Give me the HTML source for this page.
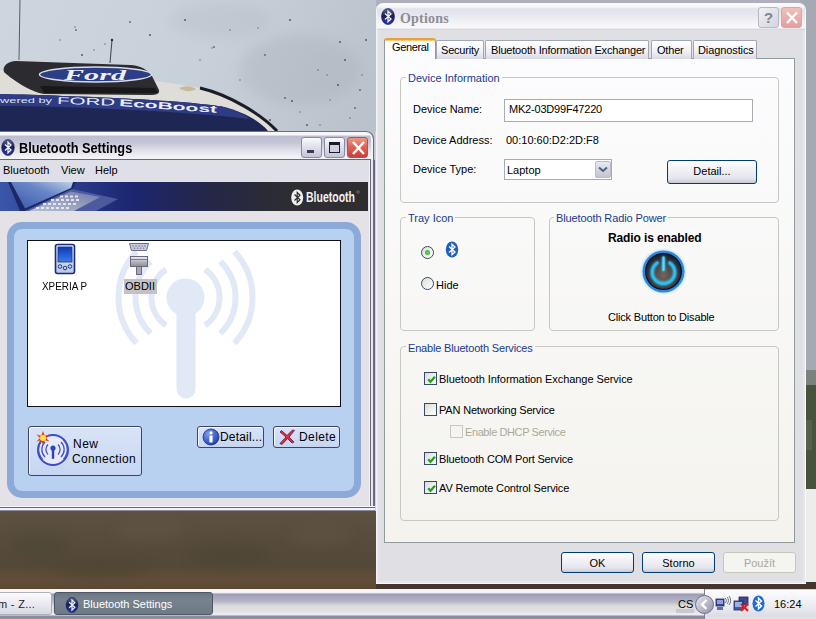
<!DOCTYPE html>
<html><head><meta charset="utf-8">
<style>
*{box-sizing:border-box;margin:0;padding:0}
html,body{width:816px;height:619px;overflow:hidden}
body{position:relative;font-family:"Liberation Sans",sans-serif;font-size:11px;color:#000;background:#C9D0D8}
.a{position:absolute}
.t{position:absolute;white-space:nowrap;line-height:13px}
/* desktop */
#sky{left:0;top:0;width:816px;height:590px;background:linear-gradient(100deg,#D2D8DF 0%,#C8CFD7 40%,#BCC3CA 100%)}
#ground{left:0;top:505px;width:816px;height:86px;background:linear-gradient(90deg,#66583F 0%,#5C4E3A 40%,#5A4C3A 70%,#4E4436 100%)}
/* BT settings window */
#bw{left:-10px;top:131px;width:379px;height:375px;background:#E4E2E6}
#btitle{left:-10px;top:131px;width:384px;height:30px;border-radius:0 8px 0 0;border-top:1px solid #70707E;border-right:1px solid #6A6A80;
 background:linear-gradient(180deg,#F6F6FA 0px,#F8F8FC 3px,#BDBDD0 4px,#C6C6D8 11px,#DCDCE6 17px,#F2F2F6 25px,#F4F4F8 27px,#686878 27px,#686878 29px);box-shadow:inset -2px 0 0 #F0F0F6}
#bmenu{left:0;top:160px;width:369px;height:21px;background:#DFDFE7}
#banner{left:0;top:182px;width:368px;height:29px;background:linear-gradient(90deg,#3A58A8 0%,#2A4090 25%,#1E2E78 40%,#20244A 58%,#2C2C34 72%,#2E2E2E 100%)}
.tbtn{position:absolute;width:21px;height:21px;border:1px solid #8A8AA6;border-radius:3px;background:linear-gradient(180deg,#FAFAFE 0%,#E4E4EE 40%,#C4C4D8 100%)}
.cls{border-color:#B85050;background:linear-gradient(180deg,#F09888 0%,#E06454 45%,#C84040 100%)}
.pbtn{position:absolute;border:1px solid #3C4660;border-radius:3px;background:linear-gradient(180deg,#D8E4F8,#C6D6F2);box-shadow:inset 1px 1px 0 #F4F8FF}
.ina{border-color:#B8B8C4;background:linear-gradient(135deg,#F0F0F4,#D4D4E0)}
.clsi{border-color:#D8A8A8;background:linear-gradient(180deg,#F0C0B8,#E0A0A0)}
.tab{position:absolute;height:19px;border:1px solid #A0A8B4;border-bottom:none;border-radius:2px 2px 0 0;background:linear-gradient(180deg,#FFFFFF 0%,#F0F0F4 60%,#D8D8E4 100%)}
.grp{position:absolute;border:1px solid #C8C8C2;border-radius:4px}
.gl{background:#FAFAF9;padding:0 2px;color:#1A3A8C}
.xbtn{position:absolute;border:1px solid #003C74;border-radius:3px;background:linear-gradient(180deg,#FFFFFF 0%,#F4F4F8 30%,#E4E4EC 80%,#C8C8D4 100%)}
.radio{position:absolute;width:13px;height:13px;border-radius:50%;border:1px solid #3A4A66;background:linear-gradient(135deg,#DCDCD6,#FFFFFF)}
.chk{position:absolute;width:13px;height:13px;border:1px solid #3A4A66;background:linear-gradient(135deg,#DCDCD6,#FFFFFF)}
.chk.dis{border-color:#CAC8BB;background:#F4F4F0}
</style></head>
<body>
<svg class="a" style="left:0;top:0" width="816" height="590" viewBox="0 0 816 590">
 <defs>
  <linearGradient id="skyg" x1="0" y1="0" x2="1" y2="0.3"><stop offset="0" stop-color="#CDD5DF"/><stop offset="0.25" stop-color="#C8D0DA"/><stop offset="0.46" stop-color="#BAC2CC"/><stop offset="1" stop-color="#A8ADB8"/></linearGradient>
  <linearGradient id="gnd" x1="0" y1="0" x2="0" y2="1"><stop offset="0" stop-color="#5E5442"/><stop offset="0.4" stop-color="#584C3C"/><stop offset="0.7" stop-color="#544838"/><stop offset="0.88" stop-color="#624E38"/><stop offset="1" stop-color="#5A4834"/></linearGradient>
  <filter id="blr" x="-50%" y="-50%" width="200%" height="200%"><feGaussianBlur stdDeviation="6"/></filter>
 </defs>
 <rect width="816" height="590" fill="url(#skyg)"/>
 <rect x="376" y="0" width="440" height="6" fill="#AEB0BC"/>
 <rect x="800" y="0" width="16" height="370" fill="#A8ADB8"/>
 <!-- right strip -->
 <rect x="800" y="0" width="16" height="385" fill="#A4A9B4"/>
 <rect x="800" y="370" width="16" height="20" fill="#6A7068" opacity="0.7"/>
 <rect x="800" y="385" width="16" height="105" fill="#48533E"/>
 <rect x="806" y="420" width="6" height="30" fill="#5C6650" opacity="0.7"/>
 <rect x="0" y="505" width="816" height="85" fill="url(#gnd)"/>
 <g filter="url(#blr)" opacity="0.5">
  <ellipse cx="40" cy="545" rx="30" ry="12" fill="#4A4636"/><ellipse cx="150" cy="530" rx="35" ry="10" fill="#625846"/>
  <ellipse cx="230" cy="555" rx="40" ry="12" fill="#4A4434"/><ellipse cx="320" cy="535" rx="30" ry="10" fill="#605644"/>
  <ellipse cx="100" cy="570" rx="50" ry="8" fill="#4C4232"/>
 </g>
 <rect x="800" y="489" width="16" height="94" fill="#EDEDEB"/>
 <rect x="376" y="582" width="440" height="8" fill="#44382E"/>
 <!-- car roof -->
 <path d="M0 70 C60 72 150 78 200 88 C230 95 262 115 277 131 L0 131 Z" fill="#DEDDD8"/>
 <path d="M200 88 C230 95 262 115 277 131" fill="none" stroke="#1A1C28" stroke-width="3"/>
 <path d="M0 94 C80 96 180 100 222 106.5 C245 112 261 122 268 131 L0 131 Z" fill="#1E2654"/>
 <path d="M0 94 C80 96 180 100 222 106.5 C235 110 245 115 250 119 C170 110 60 106 0 106 Z" fill="#2E3C86"/>
 <text x="0" y="103" font-family="Liberation Sans" font-size="8" fill="#DDE2EE" textLength="52" lengthAdjust="spacingAndGlyphs">wered by</text>
 <text x="57" y="104" font-family="Liberation Sans" font-size="10" fill="#E8ECF4" textLength="58" lengthAdjust="spacingAndGlyphs" transform="rotate(1.5 57 104)">FORD</text>
 <text x="119" y="106" font-family="Liberation Sans" font-size="10" font-weight="bold" fill="#E8ECF4" textLength="98" lengthAdjust="spacingAndGlyphs" transform="rotate(4 119 106)">EcoBoost</text>
 <!-- scoop -->
 <path d="M4 72 C2 66 8 61 16 61 L130 65 C140 65 148 70 152 76 L159 90 C160 94 156 95 150 95 L44 94 C30 92 10 78 4 72 Z" fill="#2C2C30"/>
 <path d="M40 86 L155 88 L158 93 L44 93 Z" fill="#18181A"/>
 <ellipse cx="95.5" cy="74.5" rx="56" ry="7.5" fill="#2B3E86" stroke="#D8DCE8" stroke-width="1.4"/>
 <text x="64" y="80" font-family="Liberation Serif" font-style="italic" font-weight="bold" font-size="14" fill="#EEF0F6" textLength="62" lengthAdjust="spacingAndGlyphs">Ford</text>
 <path d="M179 88 C185 85 193 86 196 89 C192 92 184 92 179 88 Z" fill="#C8BC98"/>
 <!-- antennas -->
 <line x1="20" y1="0" x2="19" y2="60" stroke="#5A5E66" stroke-width="1"/>
 <line x1="112" y1="40" x2="110" y2="63" stroke="#4A4E56" stroke-width="1.1"/>
 <circle cx="112" cy="40" r="1.2" fill="#2A2A30"/>
 <!-- specks -->
 <g filter="url(#blr)" opacity="0.22">
  <ellipse cx="300" cy="70" rx="60" ry="35" fill="#9AA2AC"/><ellipse cx="220" cy="20" rx="50" ry="18" fill="#A8B0BA"/>
 </g>
 <g fill="#3E4248" opacity="0.75"><circle cx="76" cy="30" r="0.9"/><circle cx="94" cy="50" r="0.7"/><circle cx="214" cy="47" r="0.9"/><circle cx="292" cy="101" r="1.1"/><circle cx="327" cy="75" r="0.7"/><circle cx="350" cy="118" r="0.7"/><circle cx="340" cy="42" r="1.1"/><circle cx="258" cy="28" r="0.7"/><circle cx="360" cy="90" r="0.9"/><circle cx="307" cy="125" r="1.1"/><circle cx="75" cy="27" r="0.7"/><circle cx="82" cy="55" r="1.1"/><circle cx="105" cy="44" r="0.7"/><circle cx="212" cy="48" r="0.7"/><circle cx="230" cy="30" r="0.7"/><circle cx="265" cy="55" r="0.9"/><circle cx="285" cy="98" r="0.9"/><circle cx="300" cy="112" r="0.7"/><circle cx="318" cy="70" r="0.7"/><circle cx="330" cy="100" r="0.7"/><circle cx="345" cy="60" r="1.1"/><circle cx="355" cy="108" r="0.9"/><circle cx="362" cy="75" r="0.7"/><circle cx="290" cy="20" r="1.1"/><circle cx="240" cy="80" r="0.7"/><circle cx="200" cy="60" r="0.7"/><circle cx="150" cy="35" r="1.1"/><circle cx="185" cy="20" r="1.1"/><circle cx="270" cy="120" r="1.1"/><circle cx="320" cy="125" r="0.7"/><circle cx="338" cy="85" r="1.1"/><circle cx="366" cy="40" r="1.1"/><circle cx="130" cy="22" r="0.9"/><circle cx="60" cy="40" r="0.7"/></g>
</svg>


<!-- Bluetooth settings window -->
<div id="bw" class="a"></div>
<div id="btitle" class="a"></div>
<svg class="a" style="left:1px;top:139px" width="14" height="17" viewBox="0 0 14 17">
 <ellipse cx="7" cy="8.5" rx="6.3" ry="8" fill="url(#bti)" stroke="#101030" stroke-width="0.6"/>
 <path d="M4 5.5 L10 11 L7 13.8 V3.2 L10 6 L4 11.5" fill="none" stroke="#F0F0FF" stroke-width="1.3"/>
</svg>
<div class="t" style="left:19px;top:140px;font-size:14px;font-weight:bold;color:#000;line-height:16px;transform:scaleX(0.91);transform-origin:0 0">Bluetooth Settings</div>
<div id="bmenu" class="a"></div>
<div class="t" style="left:3px;top:164px">Bluetooth</div>
<div class="t" style="left:61px;top:164px">View</div>
<div class="t" style="left:95px;top:164px">Help</div>
<svg class="a" style="left:0;top:182px" width="368" height="29" viewBox="0 182 368 29">
 <defs>
  <linearGradient id="bng" x1="0" y1="0" x2="1" y2="0"><stop offset="0" stop-color="#3A56A8"/><stop offset="0.2" stop-color="#2A3C8C"/><stop offset="0.36" stop-color="#1C2670"/><stop offset="0.55" stop-color="#24264A"/><stop offset="0.75" stop-color="#2C2C34"/><stop offset="1" stop-color="#2E2E30"/></linearGradient>
  <linearGradient id="scr" x1="0" y1="1" x2="1" y2="0"><stop offset="0" stop-color="#3A56A8"/><stop offset="0.6" stop-color="#6A86C8"/><stop offset="1" stop-color="#C0CEEA"/></linearGradient>
  <linearGradient id="kbd" x1="0" y1="1" x2="1" y2="0"><stop offset="0" stop-color="#B8C0D4"/><stop offset="0.6" stop-color="#9098B8"/><stop offset="1" stop-color="#6A78B0"/></linearGradient>
 </defs>
 <rect x="0" y="182" width="368" height="29" fill="url(#bng)"/>
 <path d="M8 182 L76 182 L73 189 L25 211 L20 211 Z" fill="#1A2868"/>
 <path d="M11 182 L73 182 L71 188 L25 208.5 Z" fill="url(#scr)"/>
 <path d="M25 211 L72 189 L118 199 L96 211 Z" fill="#5A68A8" opacity="0.75"/>
 <path d="M29 211 L71 191.5 L100 197 L74 211 Z" fill="url(#kbd)"/>
 <g fill="#F0F2FA" opacity="0.85">
  <rect x="36" y="207" width="3" height="2"/><rect x="41" y="207" width="3" height="2"/><rect x="46" y="207" width="3" height="2"/><rect x="51" y="207" width="3" height="2"/><rect x="56" y="207" width="3" height="2"/><rect x="61" y="207" width="3" height="2"/><rect x="66" y="207" width="3" height="2"/>
  <rect x="43" y="203" width="3" height="2"/><rect x="48" y="203" width="3" height="2"/><rect x="53" y="203" width="3" height="2"/><rect x="58" y="203" width="3" height="2"/><rect x="63" y="203" width="3" height="2"/><rect x="68" y="203" width="3" height="2"/><rect x="73" y="203" width="3" height="2"/>
  <rect x="51" y="199" width="3" height="2"/><rect x="56" y="199" width="3" height="2"/><rect x="61" y="199" width="3" height="2"/><rect x="66" y="199" width="3" height="2"/><rect x="71" y="199" width="3" height="2"/><rect x="76" y="199" width="3" height="2"/>
  <rect x="60" y="195.5" width="3" height="2"/><rect x="65" y="195.5" width="3" height="2"/><rect x="70" y="195.5" width="3" height="2"/><rect x="75" y="195.5" width="3" height="2"/>
 </g>
 <ellipse cx="297.2" cy="197.5" rx="6" ry="8" fill="#F0F0F0"/>
 <path d="M294.5 194.5 L300 199.8 L297.2 202.5 V192.5 L300 195.2 L294.5 200.5" fill="none" stroke="#2E2E30" stroke-width="1.2"/>
 <text x="306" y="202.5" font-family="Liberation Sans" font-weight="bold" font-size="15" fill="#F2F2F2" transform="translate(306 0) scale(0.7 1) translate(-306 0)">Bluetooth</text>
 <circle cx="358" cy="192" r="1.3" fill="none" stroke="#999" stroke-width="0.5"/>
</svg>

<!-- title buttons -->
<div class="a tbtn" style="left:301px;top:137px"><div class="a" style="left:5px;top:12px;width:7px;height:3px;background:#3A3A50"></div></div>
<div class="a tbtn" style="left:324px;top:137px"><div class="a" style="left:4px;top:4px;width:11px;height:11px;border:1px solid #1A1A2A;border-top-width:3px;background:#D0D0DC"></div></div>
<div class="a tbtn cls" style="left:347px;top:137px"><svg class="a" style="left:0;top:0" width="21" height="21"><path d="M5 4L16 16M16 4L5 16" stroke="#fff" stroke-width="2.4"/></svg></div>

<!-- right frame -->
<div class="a" style="left:369px;top:160px;width:6px;height:351px;background:linear-gradient(90deg,#F4F4F8 0px,#F4F4F8 1px,#686878 1px,#686878 2px,#E8E8F0 2px,#E8E8F0 4px,#6A6A80 4px,#6A6A80 6px)"></div>
<div class="a" style="left:0;top:506px;width:375px;height:5px;background:linear-gradient(180deg,#F4F4F8 0px,#F4F4F8 1px,#686878 1px,#686878 2px,#F0F0F6 2px,#F0F0F6 4px,#8A8A98 4px)"></div>
<div class="a" style="left:375px;top:131px;width:1px;height:380px;background:#D0D0DC"></div>
<!-- blue panel -->
<div class="a" style="left:7px;top:222px;width:354px;height:276px;border:7px solid #8BAAD8;border-radius:15px;background:#B9D1F0"></div>
<!-- list -->
<div class="a" style="left:27px;top:240px;width:314px;height:167px;border:1px solid #101018;background:#fff;overflow:hidden">
 <svg class="a" style="left:0;top:0" width="313" height="165" viewBox="27 240 313 165">
  <g fill="none" stroke="#E1E8F6" stroke-width="6">
   <path d="M165 268.5 A34 34 0 0 0 165 324.3"/>
   <path d="M204 268.5 A34 34 0 0 1 204 324.3"/>
   <path d="M149.7 260.5 A50 50 0 0 0 149.7 332.3"/>
   <path d="M219.3 260.5 A50 50 0 0 1 219.3 332.3"/>
   <path d="M135.5 250.7 A67 67 0 0 0 135.5 342.1"/>
   <path d="M233.5 250.7 A67 67 0 0 1 233.5 342.1"/>
  </g>
  <circle cx="184.5" cy="296.4" r="19" fill="#E1E8F6"/>
  <path d="M175.5 300 L194.5 300 L194.5 388 A9.5 9.5 0 0 1 175.5 388 Z" fill="#E1E8F6"/>
 </svg>
</div>
<!-- list items -->
<svg class="a" style="left:54px;top:243px" width="22" height="32" viewBox="0 0 22 32">
 <defs><linearGradient id="pda" x1="0" y1="0" x2="0" y2="1"><stop offset="0" stop-color="#E4ECF8"/><stop offset="1" stop-color="#B8C8E4"/></linearGradient>
 <linearGradient id="pdas" x1="0" y1="0" x2="0" y2="1"><stop offset="0" stop-color="#0C3ABC"/><stop offset="1" stop-color="#3C7CE8"/></linearGradient></defs>
 <rect x="1.5" y="1.5" width="19" height="29" rx="2" fill="url(#pda)" stroke="#1A2A80" stroke-width="1.6"/>
 <rect x="4" y="4" width="14" height="15" fill="url(#pdas)" stroke="#24366A" stroke-width="0.8"/>
 <circle cx="6" cy="23.5" r="1.8" fill="none" stroke="#2A3A7A" stroke-width="1"/>
 <circle cx="11" cy="25" r="1.8" fill="none" stroke="#2A3A7A" stroke-width="1"/>
 <circle cx="16" cy="23.5" r="1.8" fill="none" stroke="#2A3A7A" stroke-width="1"/>
</svg>
<div class="t" style="left:42px;top:280px;transform:scaleX(0.9);transform-origin:0 0">XPERIA P</div>
<svg class="a" style="left:128px;top:242px" width="22" height="34" viewBox="0 0 22 34">
 <defs><linearGradient id="plug" x1="0" y1="0" x2="0" y2="1"><stop offset="0" stop-color="#F0F0F4"/><stop offset="0.5" stop-color="#B8B8C4"/><stop offset="1" stop-color="#8A8A98"/></linearGradient></defs>
 <path d="M1.5 1.5 H20.5 L18.5 8.5 H3.5 Z" fill="#C8CCDC" stroke="#6A6E88" stroke-width="1"/>
 <g fill="#7A7E98"><circle cx="5" cy="4" r="0.8"/><circle cx="8" cy="4" r="0.8"/><circle cx="11" cy="4" r="0.8"/><circle cx="14" cy="4" r="0.8"/><circle cx="17" cy="4" r="0.8"/><circle cx="6.5" cy="6.3" r="0.8"/><circle cx="9.5" cy="6.3" r="0.8"/><circle cx="12.5" cy="6.3" r="0.8"/><circle cx="15.5" cy="6.3" r="0.8"/></g>
 <rect x="2.5" y="14.5" width="17" height="10" fill="url(#plug)" stroke="#6A6A7A" stroke-width="1"/>
 <line x1="2.5" y1="17.5" x2="19.5" y2="17.5" stroke="#6A6A7A" stroke-width="0.8"/>
 <rect x="8.5" y="24.5" width="5" height="8" fill="#A8A8B4" stroke="#6A6A7A" stroke-width="1"/>
</svg>
<div class="a" style="left:124px;top:279px;width:33px;height:15px;background:#C2C2C6"></div>
<div class="t" style="left:125px;top:280px">OBDII</div>
<!-- buttons -->
<div class="a pbtn" style="left:28px;top:426px;width:114px;height:50px"></div>
<svg class="a" style="left:35px;top:430px" width="36" height="38" viewBox="0 0 36 38">
 <circle cx="18" cy="20" r="15" fill="#E4EAFA" stroke="#3C4CC8" stroke-width="2"/>
 <g fill="none" stroke="#4050D0" stroke-width="1.3">
  <path d="M13 14.5 A7 7 0 0 0 13 24.5"/><path d="M23 14.5 A7 7 0 0 1 23 24.5"/>
  <path d="M10 12 A10.5 10.5 0 0 0 10 27"/><path d="M26 12 A10.5 10.5 0 0 1 26 27"/>
  <path d="M7.5 10 A13.5 13.5 0 0 0 7.5 29"/><path d="M28.5 10 A13.5 13.5 0 0 1 28.5 29"/>
 </g>
 <circle cx="18" cy="18" r="2.6" fill="#3040C0"/>
 <rect x="16.8" y="18" width="2.4" height="11" rx="1" fill="#3040C0"/>
 <g transform="translate(8,8)">
  <path d="M0 -7 L1.8 -2.2 L6.6 -3.4 L3 0 L6.6 3.4 L1.8 2.2 L0 7 L-1.8 2.2 L-6.6 3.4 L-3 0 L-6.6 -3.4 L-1.8 -2.2 Z" fill="#F04010"/>
  <circle r="3" fill="#FFE040"/>
 </g>
</svg>
<div class="t" style="left:73px;top:438px;font-size:12px;letter-spacing:0.5px">New</div>
<div class="t" style="left:72px;top:453px;font-size:12px;letter-spacing:0.33px">Connection</div>
<div class="a pbtn" style="left:197px;top:426px;width:67px;height:22px"></div>
<svg class="a" style="left:202px;top:428px" width="18" height="18" viewBox="0 0 18 18">
 <defs><radialGradient id="ig" cx="0.35" cy="0.3" r="0.8"><stop offset="0" stop-color="#7AA0F0"/><stop offset="1" stop-color="#1838A8"/></radialGradient></defs>
 <circle cx="9" cy="9" r="8" fill="url(#ig)" stroke="#203080" stroke-width="0.8"/>
 <circle cx="9" cy="4.8" r="1.6" fill="#fff"/>
 <rect x="7.4" y="7.4" width="3.2" height="7" rx="0.6" fill="#fff"/>
</svg>
<div class="t" style="left:220px;top:431px;font-size:12px;letter-spacing:0.19px">Detail...</div>
<div class="a pbtn" style="left:273px;top:426px;width:67px;height:22px"></div>
<svg class="a" style="left:277px;top:428px" width="20" height="18" viewBox="0 0 20 18">
 <path d="M3 4 L9 9 L3 15.5 L5 16.5 L10.5 10.5 L15 15 L17 14 L12 9 L17.5 2.5 L15.5 2 L10 7.5 L4.5 2.5 Z" fill="#E8283C" stroke="#6A2048" stroke-width="0.9" stroke-linejoin="round"/>
</svg>
<div class="t" style="left:299px;top:431px;font-size:12px;letter-spacing:0.4px">Delete</div>





<!-- ===== Options window ===== -->
<div class="a" style="left:376px;top:3px;width:430px;height:581px;border-radius:7px 7px 0 0;background:#E6E6EC;border:1px solid #F8F8FC;border-left-color:#F4F4F8"></div>
<div class="a" style="left:377px;top:4px;width:428px;height:26px;border-radius:6px 6px 0 0;background:linear-gradient(180deg,#FCFCFE 0px,#F4F4F8 3px,#E2E2EC 5px,#E6E6EE 10px,#F2F2F6 18px,#FAFAFC 24px,#D8D8E0 25px,#D8D8E0 26px)"></div>
<div class="a" style="left:379px;top:30px;width:424px;height:551px;background:#E0DFE3"></div>
<svg class="a" style="left:381px;top:8px" width="14" height="17" viewBox="0 0 14 17">
 <defs><linearGradient id="bti" x1="0" y1="0" x2="0" y2="1"><stop offset="0" stop-color="#5A6AA0"/><stop offset="0.45" stop-color="#1A2050"/><stop offset="1" stop-color="#2838C0"/></linearGradient></defs>
 <ellipse cx="7" cy="8.5" rx="6.5" ry="8" fill="url(#bti)" stroke="#1A1A40" stroke-width="0.6"/>
 <path d="M4 5.5 L10 11 L7 13.8 V3.2 L10 6 L4 11.5" fill="none" stroke="#F0F0FF" stroke-width="1.3"/>
</svg>
<div class="t" style="left:400px;top:10px;font-family:'Liberation Serif',serif;font-size:14px;font-weight:bold;color:#8E8E92;line-height:17px;letter-spacing:0.2px">Options</div>
<div class="a tbtn ina" style="left:758px;top:7px"><div class="t" style="left:0;top:1px;width:19px;text-align:center;font-size:15px;font-weight:bold;color:#84848C;line-height:17px">?</div></div>
<div class="a tbtn clsi" style="left:781px;top:7px"><svg class="a" style="left:0;top:0" width="20" height="20"><path d="M5 4.5L15 15M15 4.5L5 15" stroke="#fff" stroke-width="2.4"/></svg></div>

<!-- tabs -->
<div class="a" style="left:384px;top:58px;width:411px;height:485px;border:1px solid #919B9C;background:linear-gradient(180deg,#FCFCFE 0%,#F4F3EE 100%)"></div>
<div class="a tab" style="left:436px;top:40px;width:48px"></div><div class="t" style="left:441px;top:44px;letter-spacing:-0.2px">Security</div>
<div class="a tab" style="left:485px;top:40px;width:164px"></div><div class="t" style="left:491px;top:44px;letter-spacing:-0.19px">Bluetooth Information Exchanger</div>
<div class="a tab" style="left:651px;top:40px;width:41px"></div><div class="t" style="left:657px;top:44px;letter-spacing:-0.2px">Other</div>
<div class="a tab" style="left:693px;top:40px;width:64px"></div><div class="t" style="left:698px;top:44px;letter-spacing:-0.1px">Diagnostics</div>
<div class="a" style="left:384px;top:38px;width:52px;height:21px;border:1px solid #919B9C;border-bottom:none;border-radius:3px 3px 0 0;background:#FCFCFE;border-top:2px solid #E8A040;box-shadow:inset 0 1px 0 #F8CC70"></div>
<div class="t" style="left:392px;top:41px;letter-spacing:-0.35px">General</div>

<!-- Device information group -->
<div class="a grp" style="left:400px;top:77px;width:379px;height:126px"></div>
<div class="t gl" style="left:406px;top:72px;background:#FCFCFD">Device Information</div>
<div class="t" style="left:413px;top:103px">Device Name:</div>
<div class="a" style="left:504px;top:99px;width:249px;height:23px;border:1px solid #A5ACB2;background:#fff"></div>
<div class="t" style="left:509px;top:103px;letter-spacing:-0.2px">MK2-03D99F47220</div>
<div class="t" style="left:413px;top:134px">Device Address:</div>
<div class="t" style="left:506px;top:134px">00:10:60:D2:2D:F8</div>
<div class="t" style="left:413px;top:163px">Device Type:</div>
<div class="a" style="left:504px;top:159px;width:108px;height:21px;border:1px solid #A5ACB2;background:#fff"></div>
<div class="t" style="left:507px;top:164px">Laptop</div>
<div class="a" style="left:595px;top:161px;width:16px;height:17px;border:1px solid #B8BCCC;border-radius:2px;background:linear-gradient(180deg,#E8E8EE,#C4C4D0)"></div>
<svg class="a" style="left:598px;top:166px" width="10" height="7"><path d="M1 1.5 L5 5 L9 1.5" fill="none" stroke="#4D6185" stroke-width="2"/></svg>
<div class="a xbtn" style="left:667px;top:160px;width:90px;height:24px"></div>
<div class="t" style="left:667px;top:165px;width:90px;text-align:center">Detail...</div>

<!-- Tray icon group -->
<div class="a grp" style="left:400px;top:217px;width:135px;height:114px"></div>
<div class="t gl" style="left:406px;top:212px;background:#F9F9F8">Tray Icon</div>
<div class="a radio" style="left:421px;top:246px"><div class="a" style="left:3px;top:3px;width:5px;height:5px;border-radius:50%;background:radial-gradient(circle,#6CD06C,#2FA02F)"></div></div>
<svg class="a" style="left:445px;top:241px" width="14" height="17" viewBox="0 0 14 17">
 <ellipse cx="7" cy="8.5" rx="6.2" ry="8" fill="#1F5FC0"/>
 <path d="M4 5.5 L10 11 L7 13.8 V3.2 L10 6 L4 11.5" fill="none" stroke="#fff" stroke-width="1.3"/>
</svg>
<div class="a radio" style="left:421px;top:277px"></div>
<div class="t" style="left:436px;top:279px">Hide</div>

<!-- Radio power group -->
<div class="a grp" style="left:549px;top:217px;width:230px;height:114px"></div>
<div class="t gl" style="left:554px;top:212px;background:#F9F9F8;letter-spacing:-0.12px">Bluetooth Radio Power</div>
<div class="t" style="left:608px;top:232px;font-weight:bold;font-size:12px;letter-spacing:-0.12px">Radio is enabled</div>
<svg class="a" style="left:639px;top:247px" width="49" height="49" viewBox="0 0 49 49">
 <defs><radialGradient id="pw" cx="0.5" cy="0.62" r="0.6"><stop offset="0" stop-color="#7A6458"/><stop offset="0.5" stop-color="#4A4448"/><stop offset="1" stop-color="#1A2030"/></radialGradient>
 <filter id="glw" x="-30%" y="-30%" width="160%" height="160%"><feGaussianBlur stdDeviation="0.9"/></filter></defs>
 <circle cx="24.5" cy="24.5" r="22" fill="#8ACCF4" opacity="0.6" filter="url(#glw)"/>
 <circle cx="24.5" cy="24.5" r="21" fill="#2A8AE0"/>
 <circle cx="24.5" cy="24.5" r="18.6" fill="#0A1428"/>
 <circle cx="24.5" cy="24.5" r="17.2" fill="url(#pw)"/>
 <g filter="url(#glw)"><path d="M18.3 15.8 A11.3 11.3 0 1 0 30.7 15.8" fill="none" stroke="#30D0FF" stroke-width="3.4" stroke-linecap="round"/>
 <line x1="24.5" y1="10.5" x2="24.5" y2="23" stroke="#30D0FF" stroke-width="3.2" stroke-linecap="round"/></g>
 <path d="M18.3 15.8 A11.3 11.3 0 1 0 30.7 15.8" fill="none" stroke="#28C0F0" stroke-width="2.2" stroke-linecap="round"/>
 <line x1="24.5" y1="10.5" x2="24.5" y2="23" stroke="#60D8F8" stroke-width="2" stroke-linecap="round"/>
</svg>
<div class="t" style="left:608px;top:311px;letter-spacing:-0.18px">Click Button to Disable</div>

<!-- services group -->
<div class="a grp" style="left:400px;top:346px;width:379px;height:175px"></div>
<div class="t gl" style="left:406px;top:342px;background:#F7F7F4;letter-spacing:-0.18px">Enable Bluetooth Services</div>
<div class="a chk on" style="left:424px;top:372px"><svg class="a" style="left:2px;top:2px" width="9" height="9"><path d="M1.2 4.2 L3.5 6.8 L8 1.8" fill="none" stroke="#21A121" stroke-width="2.3"/></svg></div><div class="t" style="left:439px;top:373px;letter-spacing:-0.07px">Bluetooth Information Exchange Service</div>
<div class="a chk" style="left:424px;top:403px"></div><div class="t" style="left:439px;top:404px;letter-spacing:-0.18px">PAN Networking Service</div>
<div class="a chk dis" style="left:450px;top:425px"></div><div class="t" style="left:465px;top:426px;color:#ACA899;letter-spacing:-0.4px">Enable DHCP Service</div>
<div class="a chk on" style="left:424px;top:452px"><svg class="a" style="left:2px;top:2px" width="9" height="9"><path d="M1.2 4.2 L3.5 6.8 L8 1.8" fill="none" stroke="#21A121" stroke-width="2.3"/></svg></div><div class="t" style="left:439px;top:453px;letter-spacing:-0.16px">Bluetooth COM Port Service</div>
<div class="a chk on" style="left:424px;top:481px"><svg class="a" style="left:2px;top:2px" width="9" height="9"><path d="M1.2 4.2 L3.5 6.8 L8 1.8" fill="none" stroke="#21A121" stroke-width="2.3"/></svg></div><div class="t" style="left:439px;top:482px;letter-spacing:-0.14px">AV Remote Control Service</div>

<!-- dialog buttons -->
<div class="a xbtn" style="left:561px;top:552px;width:73px;height:21px"></div>
<div class="t" style="left:561px;top:557px;width:73px;text-align:center">OK</div>
<div class="a xbtn" style="left:642px;top:552px;width:73px;height:21px"></div>
<div class="t" style="left:642px;top:557px;width:73px;text-align:center">Storno</div>
<div class="a" style="left:723px;top:552px;width:73px;height:21px;border:1px solid #C9C7BA;border-radius:3px;background:#F4F4F0"></div>
<div class="t" style="left:723px;top:557px;width:73px;text-align:center;color:#ACA899">Použít</div>


<!-- ===== taskbar ===== -->
<div class="a" style="left:0;top:589px;width:816px;height:30px;background:linear-gradient(180deg,#F4F4F8 0px,#F8F8FC 3px,#E8E8F0 4px,#9A9AB2 5px,#A4A4BC 7px,#B4B4C4 12px,#DCDCDE 17px,#E2E2E4 23px,#ECECF0 24px,#ECECF0 26px,#8A8AA0 27px,#9090A4 30px)"></div>
<div class="a" style="left:-4px;top:592px;width:56px;height:23px;border:1px solid #B0B0BC;border-radius:3px;background:linear-gradient(180deg,#FCFCFE,#EAEAF0 50%,#D8D8E2)"></div>
<div class="t" style="left:-2px;top:598px;color:#222;letter-spacing:0.3px">m - Z...</div>
<div class="a" style="left:54px;top:592px;width:159px;height:23px;border:1px solid #4C5866;border-radius:3px;background:linear-gradient(180deg,#6A7682,#76828E 30%,#6E7A86)"></div>
<svg class="a" style="left:65px;top:597px" width="14" height="16" viewBox="0 0 14 17">
 <ellipse cx="7" cy="8.5" rx="6.2" ry="8" fill="url(#bti)" stroke="#101030" stroke-width="0.6"/>
 <path d="M4 5.5 L10 11 L7 13.8 V3.2 L10 6 L4 11.5" fill="none" stroke="#F0F0FF" stroke-width="1.3"/>
</svg>
<div class="t" style="left:83px;top:598px;color:#fff">Bluetooth Settings</div>
<!-- tray -->
<div class="a" style="left:704px;top:589px;width:112px;height:30px;border-left:1px solid #80808C;background:linear-gradient(180deg,#A8A8B4 0px,#FCFCFE 1px,#F8F8FA 6px,#E8E8EE 20px,#DCDCE4 27px,#E4E4EA 30px)"></div>
<div class="a" style="left:676px;top:609px;width:18px;height:4px;background:#C8C8D0"></div>
<div class="t" style="left:678px;top:598px">CS</div>
<svg class="a" style="left:694px;top:594px" width="21" height="21" viewBox="0 0 21 21">
 <defs><linearGradient id="chv" x1="0" y1="0" x2="1" y2="1"><stop offset="0" stop-color="#E8E8F0"/><stop offset="1" stop-color="#9090A8"/></linearGradient></defs>
 <circle cx="10.5" cy="10.5" r="9" fill="url(#chv)" stroke="#70708A" stroke-width="1"/>
 <path d="M12.5 6 L8 10.5 L12.5 15" fill="none" stroke="#fff" stroke-width="2.4"/>
</svg>
<svg class="a" style="left:714px;top:596px" width="18" height="16" viewBox="0 0 18 16">
 <rect x="2" y="3" width="8" height="7" fill="#3A4A90" stroke="#20285A" stroke-width="0.8"/>
 <rect x="3" y="4" width="6" height="4" fill="#8AA0E0"/>
 <rect x="3" y="11" width="6" height="3" fill="#6070A8"/>
 <path d="M11 2 A3 3 0 0 1 11 7 M13 1 A5 5 0 0 1 13 8 M15 0 A7 7 0 0 1 15 9" fill="none" stroke="#505060" stroke-width="0.8"/>
</svg>
<svg class="a" style="left:733px;top:596px" width="17" height="16" viewBox="0 0 17 16">
 <rect x="6" y="1" width="9" height="8" fill="#3A4A90" stroke="#20285A" stroke-width="0.8"/>
 <rect x="1" y="5" width="9" height="9" fill="#4A5AA0" stroke="#20285A" stroke-width="0.8"/>
 <rect x="2" y="6" width="7" height="5" fill="#9AB0E8"/>
 <path d="M8 8 L15 15 M15 8 L8 15" stroke="#E02020" stroke-width="2"/>
</svg>
<svg class="a" style="left:752px;top:595px" width="14" height="17" viewBox="0 0 14 17">
 <ellipse cx="6.5" cy="8.5" rx="6" ry="8" fill="#1E6CD0"/>
 <path d="M3.5 5.5 L9.5 11 L6.5 13.8 V3.2 L9.5 6 L3.5 11.5" fill="none" stroke="#fff" stroke-width="1.4"/>
</svg>
<div class="t" style="left:774px;top:598px">16:24</div>

</body></html>
